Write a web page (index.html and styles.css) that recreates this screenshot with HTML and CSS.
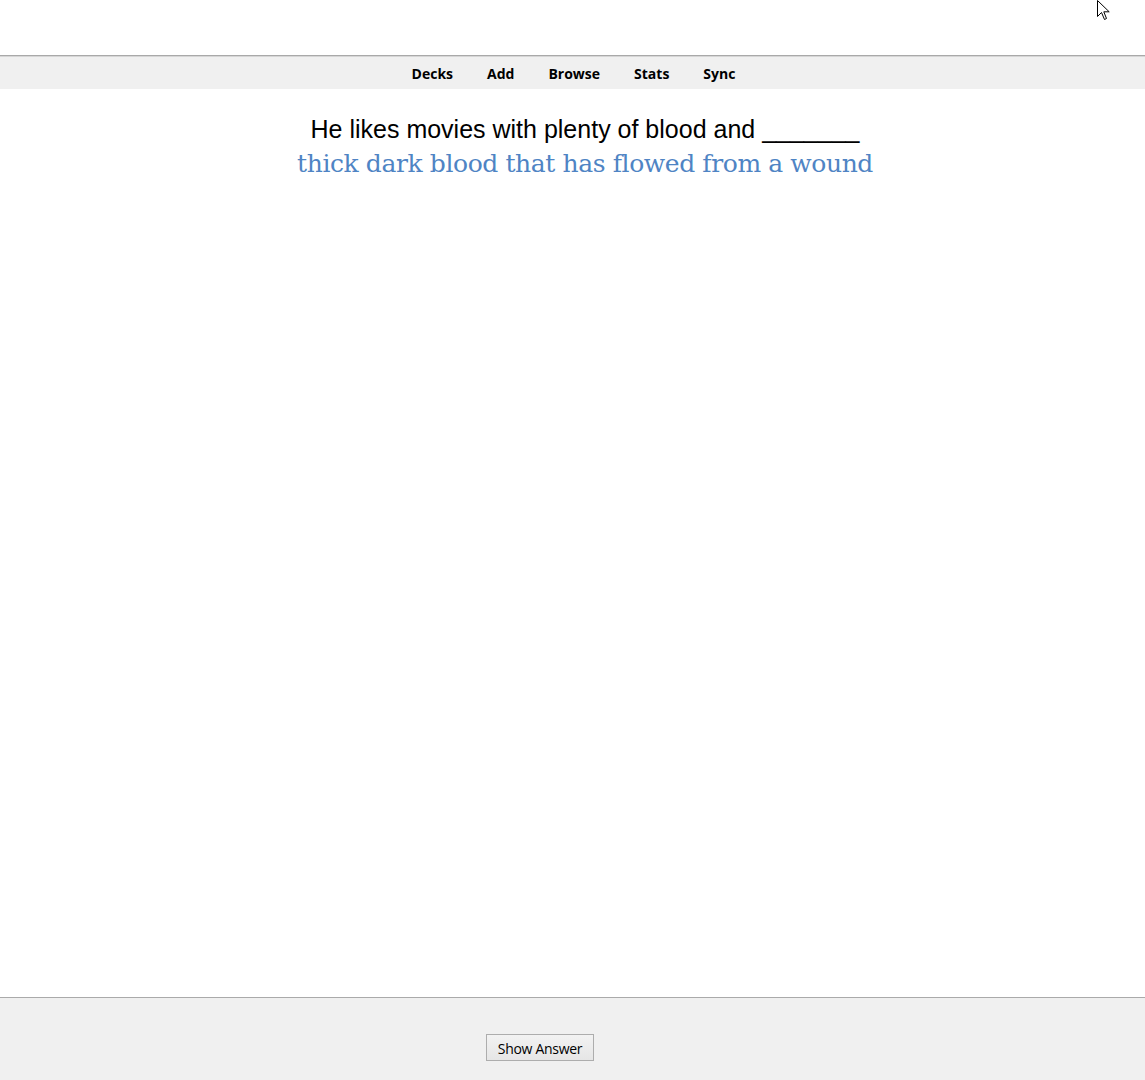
FILE: index.html
```html
<!DOCTYPE html>
<html>
<head>
<meta charset="utf-8">
<link rel="stylesheet" href="styles.css">
</head>
<body>
<div class="app">
  <div class="titlearea"></div>
  <nav class="toolbar">
    <a class="tb">Decks</a>
    <a class="tb">Add</a>
    <a class="tb">Browse</a>
    <a class="tb">Stats</a>
    <a class="tb">Sync</a>
  </nav>
  <main class="card">
    <div class="question">He likes movies with plenty of blood and _______</div>
    <div class="hint">thick dark blood that has flowed from a wound</div>
  </main>
  <footer class="bottombar">
    <button class="btn">Show Answer</button>
  </footer>
  <svg class="cursor" width="14" height="22" viewBox="0 0 14 22">
    <path d="M0.5 0.5 L0.5 16.5 L4.5 12.5 L7.5 19.5 L9.5 18.5 L6.8 11.8 L12.2 11.8 Z" fill="#fff" stroke="#000" stroke-width="1"/>
  </svg>
</div>
</body>
</html>
```
FILE: styles.css
```css
html, body {
  margin: 0;
  padding: 0;
  background: #fff;
}
.app {
  position: relative;
  width: 1145px;
  height: 1080px;
  display: flex;
  flex-direction: column;
  overflow: hidden;
}
.titlearea {
  height: 55px;
  background: #fff;
  border-bottom: 1px solid #a9a9a9;
}
.toolbar {
  height: 32px;
  background: #f0f0f0;
  border-top: 1px solid #d6d6d6;
  display: flex;
  justify-content: center;
  align-items: center;
  font-family: "Open Sans", "Noto Sans", sans-serif;
  font-weight: 700;
  font-size: 14px;
  color: #000;
  padding-left: 2px;
}
.tb {
  padding: 0 17px;
  letter-spacing: 0;
}
.card {
  flex: 1;
  background: #fff;
  text-align: center;
  padding-top: 23px;
  padding-left: 25px;
}
.question {
  font-family: "Liberation Sans", Arial, sans-serif;
  font-size: 25px;
  line-height: 34px;
  color: #000;
}
.hint {
  font-family: "DejaVu Serif", "Liberation Serif", serif;
  font-size: 25px;
  line-height: 34px;
  color: #4f84c4;
  margin-top: 1px;
  letter-spacing: -0.4px;
}
.bottombar {
  background: #f0f0f0;
  border-top: 1px solid #aaaaaa;
  display: flex;
  align-items: flex-start;
  padding-top: 36px;
  padding-left: 486px;
  box-sizing: border-box;
  height: 83px;
}
.btn {
  width: 108px;
  height: 27px;
  font-family: "Open Sans", "Noto Sans", sans-serif;
  font-size: 14px;
  color: #000;
  background: linear-gradient(#f2f2f2, #e6e6e6);
  border: 1px solid #adadad;
  border-radius: 0;
  padding: 2px 0 0 0;
  letter-spacing: -0.3px;
}
.cursor {
  position: absolute;
  left: 1097px;
  top: 0;
}
```
